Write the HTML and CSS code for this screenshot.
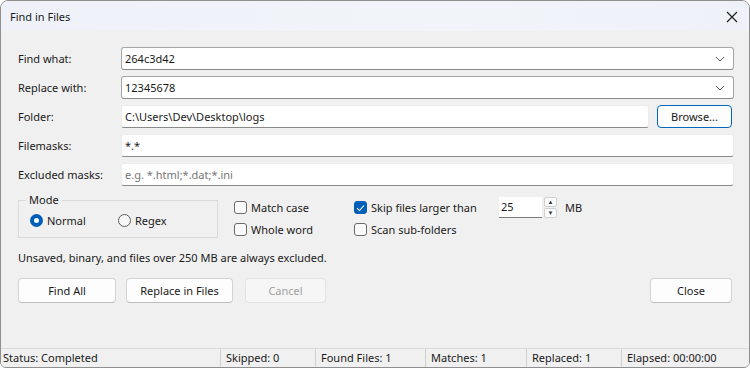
FILE: index.html
```html
<!DOCTYPE html>
<html lang="en">
<head>
  <meta charset="UTF-8">
  <title>Find in Files</title>
  <link rel="stylesheet" href="styles.css">
</head>
<body>
  <div id="window">
    <div class="titlebar">
      <span class="title">Find in Files</span>
      <svg class="close-icon" width="12" height="12" viewBox="0 0 12 12">
        <path d="M1 1 L11 11 M11 1 L1 11" stroke="#1a1a1a" stroke-width="1.1" fill="none"/>
      </svg>
    </div>

    <div class="content">
      <div class="field-row">
        <label>Find what:</label>
        <div class="combo">
          <span>264c3d42</span>
          <svg class="chevron" width="10" height="6" viewBox="0 0 10 6"><path d="M1 1 L5 5 L9 1" stroke="#5a5a5a" fill="none"/></svg>
        </div>
      </div>
      <div class="field-row">
        <label>Replace with:</label>
        <div class="combo">
          <span>12345678</span>
          <svg class="chevron" width="10" height="6" viewBox="0 0 10 6"><path d="M1 1 L5 5 L9 1" stroke="#5a5a5a" fill="none"/></svg>
        </div>
      </div>
      <div class="field-row">
        <label>Folder:</label>
        <div class="folder-line">
          <div class="textbox">C:\Users\Dev\Desktop\logs</div>
          <button class="btn btn-default browse">Browse...</button>
        </div>
      </div>
      <div class="field-row">
        <label>Filemasks:</label>
        <div class="textbox">*.*</div>
      </div>
      <div class="field-row">
        <label>Excluded masks:</label>
        <div class="textbox placeholder">e.g. *.html;*.dat;*.ini</div>
      </div>

      <div class="options">
        <fieldset class="mode">
          <legend>Mode</legend>
          <div class="radio-line">
            <span class="radio"><span class="radio-dot checked"></span>Normal</span>
            <span class="radio"><span class="radio-dot"></span>Regex</span>
          </div>
        </fieldset>
        <div class="check-col">
          <div class="check"><span class="box"></span>Match case</div>
          <div class="check"><span class="box"></span>Whole word</div>
        </div>
        <div class="check-col">
          <div class="skip-line">
            <div class="check skip"><span class="box checked">
              <svg width="9" height="8" viewBox="0 0 9 8"><path d="M1 4.2 L3.4 6.5 L8 1.5" stroke="#fff" stroke-width="1.1" fill="none"/></svg>
            </span>Skip files larger than</div>
            <div class="spinner">
              <div class="spin-input">25</div>
              <div class="spin-buttons">
                <span class="spin-btn">&#9650;</span>
                <span class="spin-btn">&#9660;</span>
              </div>
            </div>
            <span class="unit">MB</span>
          </div>
          <div class="check"><span class="box"></span>Scan sub-folders</div>
        </div>
      </div>

      <p class="note">Unsaved, binary, and files over 250 MB are always excluded.</p>

      <div class="actions">
        <button class="btn find-all">Find All</button>
        <button class="btn replace">Replace in Files</button>
        <button class="btn cancel" disabled>Cancel</button>
        <button class="btn close">Close</button>
      </div>
    </div>

    <div class="statusbar">
      <span class="cell status">Status: Completed</span>
      <span class="cell skipped">Skipped: 0</span>
      <span class="cell found">Found Files: 1</span>
      <span class="cell matches">Matches: 1</span>
      <span class="cell replaced">Replaced: 1</span>
      <span class="cell elapsed">Elapsed: 00:00:00</span>
    </div>
  </div>
</body>
</html>
```

FILE: styles.css
```css
html, body {
  margin: 0;
  background: #ffffff;
}

body {
  font-family: "Segoe UI", "Noto Sans", sans-serif;
  font-size: 11px;
  color: #1a1a1a;
}

#window {
  box-sizing: border-box;
  width: 750px;
  height: 368px;
  display: flex;
  flex-direction: column;
  background: #f0f0f0;
  border: 1px solid #8f8f8f;
  border-radius: 8px 8px 6px 6px;
  overflow: hidden;
}

.titlebar {
  height: 30px;
  flex: none;
  display: flex;
  align-items: center;
  justify-content: space-between;
  padding: 0 11px 0 9px;
  background: linear-gradient(90deg, #eef2f8, #f1f5fa 60%, #eef2f8);
}

.title { padding-top: 1px; }

.close-icon { margin-top: 1px; }

.content {
  flex: 1;
  display: flex;
  flex-direction: column;
  padding: 16px 15px 0 17px;
}

.field-row {
  display: grid;
  grid-template-columns: 103px 1fr;
  align-items: center;
  height: 23px;
  margin-bottom: 6px;
}

.combo,
.textbox {
  box-sizing: border-box;
  height: 23px;
  display: flex;
  align-items: center;
  padding: 0 3px;
  background: #ffffff;
}

.combo {
  justify-content: space-between;
  border: 1px solid #a6a6a6;
  border-bottom-color: #8a8a8a;
  border-radius: 3px;
  padding-right: 8px;
}

.textbox {
  border: 1px solid #ececec;
  border-bottom: 1px solid #8a8a8a;
  border-radius: 3px;
}

.placeholder { color: #767676; }

.folder-line {
  display: flex;
  gap: 8px;
  padding-right: 2px;
}

.folder-line .textbox { flex: 1; }

.btn {
  box-sizing: border-box;
  font: inherit;
  color: #1a1a1a;
  background: #fdfdfd;
  border: 1px solid #d3d3d3;
  border-bottom-color: #bdbdbd;
  border-radius: 4px;
  height: 25px;
  padding: 0;
}

.btn-default {
  border: 1px solid #0067c0;
}

.browse {
  width: 75px;
  height: 23px;
}

.options {
  display: flex;
  margin-top: 1px;
  height: 44px;
}

.mode {
  box-sizing: border-box;
  width: 200px;
  height: 45px;
  margin: 0;
  padding: 0 0 0 11px;
  border: 1px solid #dadada;
  border-radius: 0;
}

.mode legend {
  padding: 0 3px;
  margin-left: -4px;
  line-height: 14px;
}

.radio-line {
  display: flex;
  margin-top: 6px;
}

.radio {
  display: flex;
  align-items: center;
  gap: 4px;
  width: 88px;
}

.radio-dot {
  box-sizing: border-box;
  width: 13px;
  height: 13px;
  border: 1px solid #5e5e5e;
  border-radius: 50%;
  background: #f7f7f7;
}

.radio-dot.checked {
  border: 4px solid #005fb8;
  background: #ffffff;
}

.check-col {
  display: flex;
  flex-direction: column;
  gap: 7px;
  padding-top: 7px;
}

.mode + .check-col {
  margin-left: 16px;
  width: 120px;
}

.check {
  display: flex;
  align-items: center;
  gap: 4px;
  height: 15px;
}

.box {
  box-sizing: border-box;
  width: 13px;
  height: 13px;
  border: 1px solid #6b6b6b;
  border-radius: 3px;
  background: #fafafa;
  display: flex;
  align-items: center;
  justify-content: center;
}

.box.checked {
  background: #005fb8;
  border-color: #005fb8;
}

.skip-line {
  display: flex;
  align-items: center;
  height: 15px;
}

.skip { width: 145px; }

.spinner {
  display: flex;
  align-items: center;
  gap: 2px;
}

.spin-input {
  box-sizing: border-box;
  width: 43px;
  height: 21px;
  padding: 2px 0 0 2px;
  background: #ffffff;
  border-bottom: 1px solid #7a7a7a;
}

.spin-buttons {
  display: flex;
  flex-direction: column;
  gap: 1px;
}

.spin-btn {
  box-sizing: border-box;
  width: 13px;
  height: 10px;
  font-size: 6px;
  line-height: 8px;
  text-align: center;
  color: #333333;
  background: #fbfbfb;
  border: 1px solid #cfcfcf;
  border-radius: 2px;
}

.unit { margin-left: 8px; }

.note {
  margin: 14px 0 0;
  line-height: 14px;
}

.actions {
  display: flex;
  margin-top: 13px;
  padding-right: 2px;
}

.find-all { width: 98px; }

.replace {
  width: 107px;
  margin-left: 10px;
}

.cancel {
  width: 81px;
  margin-left: 12px;
  color: #a0a0a0;
  background: #f6f6f6;
  border-color: #e3e3e3;
}

.close {
  width: 82px;
  margin-left: auto;
}

.statusbar {
  flex: none;
  display: flex;
  height: 18px;
  border-top: 1px solid #dadada;
  background: #f0f0f0;
}

.cell {
  box-sizing: border-box;
  padding-left: 3px;
  line-height: 18px;
  border-left: 1px solid #d0d0d0;
}

.status { width: 219px; border-left: none; padding-left: 2px; }
.skipped { width: 95px; padding-left: 5px; }
.found { width: 110px; padding-left: 5px; }
.matches { width: 101px; padding-left: 5px; }
.replaced { width: 95px; padding-left: 5px; }
.elapsed { flex: 1; padding-left: 5px; }
```
